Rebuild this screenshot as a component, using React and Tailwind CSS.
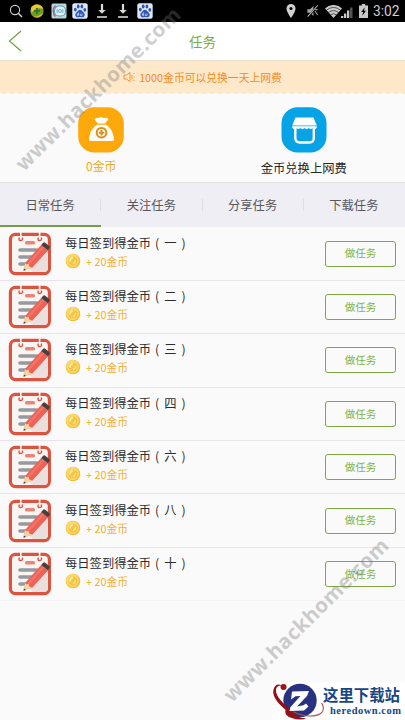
import { useState } from 'react'

const tabs = ['日常任务', '关注任务', '分享任务', '下载任务']
const tasks = ['一', '二', '三', '四', '六', '八', '十']

function PawIcon() {
  return (
    <svg viewBox="0 0 16 16" className="w-4 h-4">
      <rect x="0.3" y="0.3" width="15.4" height="15.4" rx="2.2" fill="#dfe6f6" />
      <g fill="#2f55b5">
        <ellipse cx="3.3" cy="6.6" rx="1.4" ry="1.9" />
        <ellipse cx="6.2" cy="3.5" rx="1.4" ry="2" />
        <ellipse cx="9.9" cy="3.5" rx="1.4" ry="2" />
        <ellipse cx="12.8" cy="6.8" rx="1.4" ry="1.9" />
        <path d="M8 6.8c-1.8 0-2.3 1.7-3.8 3-1.500 1.400-1 4.400 1.300 4.400 1 0 1.500-.3 2.500-.3s1.500.3 2.500.3c2.300 0 2.800-3 1.300-4.400C10.300 8.500 9.800 6.800 8 6.800z" />
      </g>
      <path d="M6.600 9.500v2.900H5.300v-1.500h1.300M8.300 10.800v1.600h1.700v-1.900" fill="none" stroke="#dfe6f6" strokeWidth="0.700" />
    </svg>
  )
}

function DownloadIcon() {
  return (
    <svg viewBox="0 0 12 16" className="w-3 h-4">
      <path d="M4.900 1h2.200v6h2.600L6 10.800 2.300 7h2.600z" fill="#d8d8d8" />
      <path d="M1 14h10" stroke="#d8d8d8" strokeWidth="1.600" />
    </svg>
  )
}

function StatusBar() {
  return (
    <div className="h-[22px] bg-black flex items-center text-[#d0d0d0]">
      <svg viewBox="0 0 14 14" className="w-[14px] h-[14px] ml-[9px]" fill="none" stroke="#d0d0d0">
        <circle cx="6" cy="6" r="4.600" strokeWidth="1.100" />
        <path d="M9.200 9.200l3.800 3.800" strokeWidth="1.500" />
      </svg>
      <svg viewBox="0 0 14 14" className="w-[14px] h-[14px] ml-[7px]">
        <circle cx="7" cy="7" r="6.700" fill="#6d9c2a" />
        <path d="M1 4a6.700 6.700 0 0 1 12.300 1C10 3.500 5 4 1.500 9z" fill="#f0c332" />
        <path d="M13 9a6.500 6.500 0 0 1-10 3.300c4 .5 7-1 10-3.300z" fill="#dfb52c" />
        <path d="M7 4v6M4 7h6" stroke="#2c7a31" strokeWidth="2" />
      </svg>
      <svg viewBox="0 0 16 16" className="w-4 h-4 ml-[7px]">
        <rect x="0.500" y="0.500" width="15" height="15" rx="1.500" fill="#b9d9df" />
        <path d="M4.500 2.500C1.500 5 1.500 11 4.500 13.500" fill="none" stroke="#c95b7b" strokeWidth="1.500" />
        <rect x="3.500" y="3" width="11" height="10" rx="4.500" fill="#e7f4f6" stroke="#4c9dbf" strokeWidth="1.100" />
        <path d="M6.500 5.800q-1.300 2.200 0 4.400M11.500 5.800q1.300 2.200 0 4.400" fill="none" stroke="#4c9dbf" strokeWidth="0.800" />
        <circle cx="9" cy="8" r="1.500" fill="none" stroke="#4c9dbf" strokeWidth="0.800" />
      </svg>
      <div className="ml-[5px]"><PawIcon /></div>
      <div className="ml-[8px]"><DownloadIcon /></div>
      <div className="ml-[9px]"><DownloadIcon /></div>
      <div className="ml-[8px]"><PawIcon /></div>

      <div className="ml-auto flex items-center pr-[5px]">
        <svg viewBox="0 0 10 14" className="w-[10px] h-[14px]">
          <path fillRule="evenodd" d="M5 0a4.500 4.500 0 0 0-4.500 4.500C.5 8 5 14 5 14s4.500-6 4.500-9.500A4.500 4.500 0 0 0 5 0zm0 2.900a1.600 1.600 0 1 1 0 3.200 1.600 1.600 0 0 1 0-3.200z" fill="#d0d0d0" />
        </svg>
        <svg viewBox="0 0 14 14" className="w-[13px] h-[14px] ml-[10px]">
          <path d="M1.500 5h2.800L8 1.500v11L4.300 9H1.500z" fill="#a6a6a6" />
          <path d="M12.800 1L2 13.500" stroke="#000" strokeWidth="2" />
          <path d="M12.800.8L1.800 13" stroke="#b8b8b8" strokeWidth="1.100" />
          <path d="M9.500 7l3 4M10 5.500h2.500" stroke="#a6a6a6" strokeWidth="1.200" />
        </svg>
        <svg viewBox="0 0 17 13" className="w-[17px] h-[13px] ml-[6px]">
          <path d="M8.500 13L0 3.500a12 12 0 0 1 17 0z" fill="#c9c9c9" />
          <path d="M1.200 5.400q7.300-6 14.600 0M3.300 7.700q5.200-4.200 10.400 0M5.300 9.900q3.200-2.400 6.400 0" fill="none" stroke="#000" strokeWidth="0.600" />
        </svg>
        <svg viewBox="0 0 13 13" className="w-[13px] h-[13px] -ml-px">
          <path d="M0 11h2.300v2H0zM3 8.500h2.300V13H3zM6 5.500h2.300V13H6z" fill="#c9c9c9" />
          <path d="M9 2.500h2.500V13H9z" fill="#545454" />
        </svg>
        <svg viewBox="0 0 9 14" className="w-[9px] h-[14px] ml-[5px]">
          <path d="M2.800 0h3.400v1.500H9V14H0V1.500h2.800z" fill="#c9c9c9" />
          <path d="M5.700 3.200L2.200 8h2L3.300 11.800 7 6.800H5z" fill="#000" />
        </svg>
        <span className="ml-[5px] w-[27px] whitespace-nowrap font-[Roboto,sans-serif] text-[13.800px] leading-[22px]">3:02</span>
      </div>
    </div>
  )
}

function MoneyBag() {
  return (
    <svg viewBox="0 0 46 46" className="w-[46px] h-[46px]">
      <rect x="0.200" y="0.200" width="45.600" height="45.200" rx="16" fill="#fda90b" />
      <path d="M16.500 12.500q2-2.500 4-1.500 2.500-2 5 0 2.500-1 5 1l-3.300 4.500h-7.500zM19 17.800h9c4.500 2.500 7.500 8 8 14.700q0 1.500-1.500 1.500h-22Q11 34 11 32.500c.5-6.700 3.500-12.200 8-14.700z" fill="#fffdf5" />
      <circle cx="23.500" cy="25.700" r="4.800" fill="none" stroke="#dd8e16" strokeWidth="2" />
      <path d="M23.500 23v5.400M20.800 25.700h5.400" stroke="#dd8e16" strokeWidth="2" />
    </svg>
  )
}

function ShopIcon() {
  return (
    <svg viewBox="0 0 46 46" className="w-[46px] h-[46px]">
      <rect x="0.500" y="0.200" width="45" height="45.200" rx="16" fill="#06a3e7" />
      <path d="M14.500 10.500h18L35.800 18.500H11.200z" fill="#fff" />
      <path d="M11.200 19.200h24.600v1.500q-1.700 2.300-4 .4-2 2-4.100 0-2 2.200-4.200 0-2.100 2.200-4.200 0-2 2-4.100 0-2.300 1.900-4-.4z" fill="#fff" />
      <path d="M14.300 21v10q0 4.500 4.500 4.500h9.500q4.500 0 4.500-4.500V21" fill="none" stroke="#fff" strokeWidth="2.400" />
    </svg>
  )
}

function TaskIcon() {
  return (
    <svg viewBox="0 0 44 44" className="w-11 h-11 shrink-0">
      <rect x="2.400" y="2.400" width="39" height="39.200" rx="5" fill="#faf5f3" stroke="#dc5440" strokeWidth="3.200" />
      <path d="M12.800 0v4M31.600 0v4" stroke="#fafafa" strokeWidth="1.600" />
      <path d="M22 37.500L39.800 20v16q0 4-4 4H25z" fill="#eadfdd" />
      <g fill="none" stroke="#dc5440" strokeWidth="1.400">
        <path d="M11.500 5.500q-1.500 3 1.200 3t1.500-3M30.500 5.500q-1.500 3 1.200 3t1.500-3" />
      </g>
      <rect x="17" y="9" width="10" height="3.600" rx="1.500" fill="#e78578" />
      <path d="M12 18h17M12 25h14M12 32h8" stroke="#96999d" strokeWidth="3.600" strokeLinecap="round" />
      <g transform="translate(-0.800 -0.500)">
        <path d="M17.800 31.500L34.200 13.200l6.800 5.500L25 36.200l-7.800 2.300z" fill="#ee6255" />
        <path d="M20 33.500L36.500 15" stroke="#f37469" strokeWidth="2.200" />
        <path d="M17.800 31.500l-1.500 7.700 8.700-3-2.800-1.200-.7-2.500-2.500.3z" fill="#f5d2a4" />
        <path d="M16.700 37l-.4 2.200 2.500-.8z" fill="#443b3c" />
        <path d="M34 13.400l1.800-2q1-1 2.200-.1l4 3.300q1.200 1 .2 2.200l-1.500 1.900z" fill="#454043" />
      </g>
    </svg>
  )
}

function Coin() {
  return (
    <svg viewBox="0 0 16 16" className="w-4 h-4">
      <circle cx="8" cy="8" r="7.300" fill="#f6bd3a" />
      <circle cx="7.600" cy="7.500" r="6.400" fill="#fbd968" />
      <circle cx="8" cy="8" r="4.600" fill="#f7c545" />
      <path d="M5 8.500q0-3.500 3-4" fill="none" stroke="#feeeaa" strokeWidth="1.600" />
      <path d="M8 10.500q2.500-.5 2.500-3.500" fill="none" stroke="#fde58c" strokeWidth="1.300" />
    </svg>
  )
}

function TaskRow({ n }) {
  return (
    <div className="h-[53.400px] flex items-center pl-2 pr-[9px] border-b border-[#e6e6ea] last:border-[#f3f3f5]">
      <TaskIcon />
      <div className="ml-[13px] h-11 flex flex-col">
        <p className="text-[12.300px] leading-[22px] text-[#2d2d2d] whitespace-nowrap">每日签到得金币<span className="ml-1">(</span><span className="mx-[5px]">{n}</span>)</p>
        <div className="flex items-center h-3 mt-px">
          <Coin />
          <span className="ml-[5px] text-[10.800px] leading-[14px] text-[#f3b02f] whitespace-nowrap">+ 20金币</span>
        </div>
      </div>
      <button className="ml-auto w-[71px] h-[26px] rounded-[3px] border border-[#7da93f] text-[10.500px] leading-none text-[#7eb443] text-center">做任务</button>
    </div>
  )
}

function SiteBadge() {
  return (
    <div className="absolute left-[272px] top-[682px] w-[133px] h-[38px] bg-white flex">
      <svg viewBox="0 0 54 38" className="w-[54px] h-[38px] shrink-0">
        <circle cx="28" cy="18.500" r="16.700" fill="#29327f" />
        <path d="M10 3.500C2 3.500 2.500 11 8.500 18c4 5 8 8 13 10.500l3 5.500q5 2.500 10 2.300-6 2.500-14 0c-7-2-7.500-5-7-8.500C4 20 0 13 1.500 7.500 3 2.500 6 1.500 10 3.500z" fill="#8f1218" />
        <path d="M21 29.500q8 4.500 17 4.500c9 0 15-3.500 13-10q-.5-1.500-1.500-3" fill="none" stroke="#a5524c" strokeWidth="1.100" />
        <circle cx="11.500" cy="5" r="3" fill="#9d1419" />
        <path d="M20 9.500l17-.5-2 5-10 10.500 6.500-1.300 2.500-1.700 2.500 3-4.500 4-14.500.5 1-4 10-11-5 .2-4.500 3.300z" fill="#fff" />
      </svg>
      <div className="text-[#174684] whitespace-nowrap">
        <p className="text-[15.400px] leading-[18px] mt-[3px] font-bold -ml-[3px]">这里下载站</p>
        <p className="font-['Liberation_Serif',serif] text-[10.500px] leading-[11px] mt-[2px] font-bold ml-[4px] tracking-[0.500px]">heredown.com</p>
      </div>
    </div>
  )
}

function Watermark({ x, y }) {
  return (
    <text transform={`translate(${x} ${y}) rotate(-44.600)`} textLength="222" lengthAdjust="spacing" className="fill-[#777777] font-['Open_Sans',sans-serif] text-[20.500px] font-bold">
      www.hackhome.com
    </text>
  )
}

export default function App() {
  const [active, setActive] = useState(0)

  return (
    <div className="relative w-[405px] h-[720px] overflow-hidden bg-[#fafafa] font-['Noto_Sans_CJK_SC',sans-serif]">
      <StatusBar />

      <header className="h-[38px] bg-white grid grid-cols-3 items-center">
        <svg viewBox="0 0 14 22" className="w-[14px] h-[22px] ml-2" fill="none" stroke="#749f3c" strokeWidth="1.200">
          <path d="M13 1L1.500 11 13 21" />
        </svg>
        <h1 className="text-center text-[13.500px] leading-5 text-[#76b041]">任务</h1>
      </header>

      {/* Notice */}
      <div className="bg-[#fde9ca] h-[32px] border-t border-[#e9ddcf] flex items-center justify-center">
        <svg viewBox="0 0 12 12" className="w-3 h-3" fill="none" stroke="#f39436" strokeWidth="1">
          <path d="M1 4h2.500L7 1.500v9L3.500 8H1zM9 4v4M11 2v1M11 5.500v1M11 9v1" />
        </svg>
        <span className="ml-[4px] text-[10.800px] leading-4 text-[#f58b24] whitespace-nowrap">1000金币可以兑换一天上网费</span>
      </div>
      <svg className="block w-full h-[3px]" viewBox="0 0 405 3">
        <defs>
          <pattern id="scallop" width="8" height="3" patternUnits="userSpaceOnUse">
            <path d="M0 0h8q-1 2.200-4 2.200T0 0z" fill="#fde9ca" />
          </pattern>
        </defs>
        <rect width="405" height="3" fill="url(#scallop)" />
      </svg>

      {/* Balance and exchange */}
      <div className="h-[87px] grid grid-cols-2 pt-[12px]">
        <div className="flex flex-col items-center">
          <MoneyBag />
          <span className="mt-[3px] text-[12px] leading-5 text-[#f0ab25]">0金币</span>
        </div>
        <div className="flex flex-col items-center">
          <ShopIcon />
          <span className="mt-[5px] text-[12.300px] leading-5 text-[#262626]">金币兑换上网费</span>
        </div>
      </div>

      <nav className="h-[45px] bg-[#efeef4] border-t border-[#e3e2e8] grid grid-cols-4">
        {tabs.map((t, i) => (
          <button key={t} onClick={() => setActive(i)}
            className={`relative text-[12.300px] text-[#58585c] border-b-2 pt-[2px] pr-px ${active === i ? 'border-[#769d4b]' : 'border-transparent'}`}>
            {t}
            {i < 3 && <span className="absolute right-0 top-4 h-3 w-px bg-[#dedde3]" />}
          </button>
        ))}
      </nav>

      <main className="pt-[0.500px]">
        {tasks.map(n => <TaskRow key={n} n={n} />)}
      </main>

      <svg viewBox="0 0 405 720" className="absolute inset-0 w-full h-full pointer-events-none opacity-35">
        <Watermark x={24} y={172} />
        <Watermark x={232} y={703} />
      </svg>
      <SiteBadge />
    </div>
  )
}
